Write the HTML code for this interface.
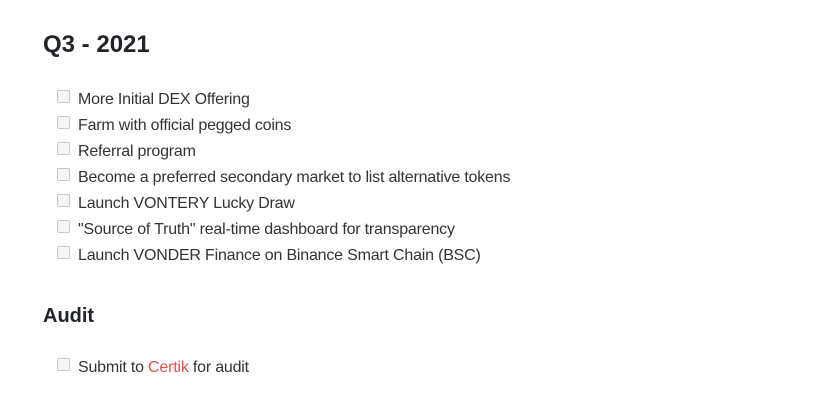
<!DOCTYPE html>
<html><head><style>
body{margin:0;width:829px;height:415px;background:#fff;font-family:"Liberation Sans",sans-serif;color:#333;position:relative;overflow:hidden}
h2{position:absolute;left:43px;margin:0;font-weight:bold;color:#212529}
.i{position:absolute;left:57px;font-size:16px;height:26px;line-height:26px;white-space:nowrap;letter-spacing:-0.2px}
.i b{display:inline-block;width:11px;height:11px;border:1px solid #c8c8c8;border-radius:2px;background:#f6f6f6;vertical-align:middle;margin-right:8px;position:relative;top:-3px;font-weight:normal}
a{color:#e84c4c;text-decoration:none}
</style></head><body>
<h2 style="top:31px;font-size:24px">Q3 - 2021</h2>
<div class="i" style="top:87px"><b></b>More Initial DEX Offering</div>
<div class="i" style="top:113px"><b></b>Farm with official pegged coins</div>
<div class="i" style="top:139px"><b></b>Referral program</div>
<div class="i" style="top:165px"><b></b>Become a preferred secondary market to list alternative tokens</div>
<div class="i" style="top:191px"><b></b>Launch VONTERY Lucky Draw</div>
<div class="i" style="top:217px"><b></b>"Source of Truth" real-time dashboard for transparency</div>
<div class="i" style="top:243px"><b></b>Launch VONDER Finance on Binance Smart Chain (BSC)</div>
<h2 style="top:305px;font-size:20px">Audit</h2>
<div class="i" style="top:355px"><b></b>Submit to <a>Certik</a> for audit</div>
</body></html>
